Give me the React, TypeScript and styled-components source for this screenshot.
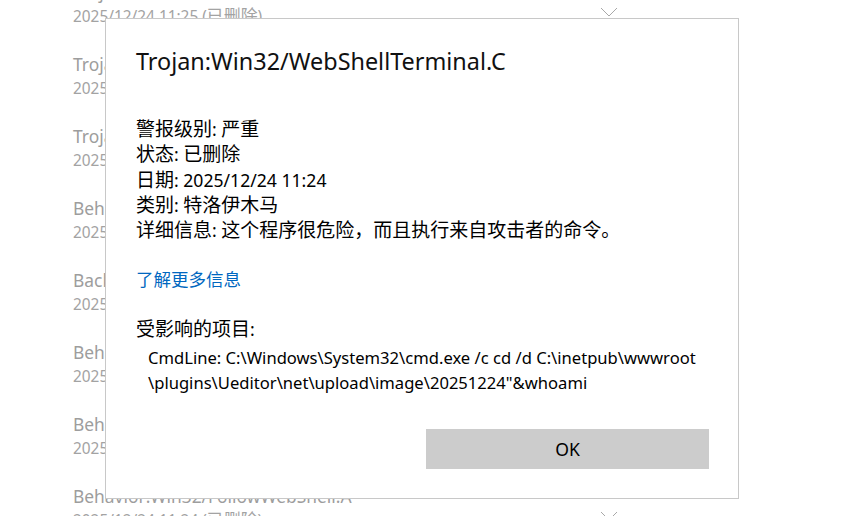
import React from 'react';
import styled, { createGlobalStyle } from 'styled-components';

const GlobalStyle = createGlobalStyle`
  html, body {
    margin: 0;
    padding: 0;
    background: #fff;
    overflow: hidden;
  }
  body {
    font-family: "Segoe UI", "Noto Sans", "Noto Sans CJK SC", sans-serif;
  }
`;

const Page = styled.div`
  position: relative;
  width: 857px;
  height: 516px;
  overflow: hidden;
  background: #fff;
`;

const HistoryList = styled.div`
  display: flex;
  flex-direction: column;
  margin-top: -20px;
  padding-left: 73px;
  width: 545px;
`;

const HistoryRow = styled.div`
  display: flex;
  align-items: center;
  height: 60px;
  margin-bottom: 12px;
`;

const RowText = styled.div`
  flex: 1;
  display: flex;
  flex-direction: column;
  align-self: flex-start;
`;

const RowTitle = styled.div`
  height: 24px;
  font-size: 17.4px;
  line-height: 24px;
  color: #9d9d9d;
  white-space: nowrap;
`;

const RowDate = styled.div`
  height: 22px;
  font-size: 15.4px;
  line-height: 22px;
  color: #a3a3a3;
  white-space: nowrap;
`;

const Chevron = styled.svg`
  width: 18px;
  height: 10px;
  margin-top: 4px;
  flex: none;
`;

const Han = styled.span<{ $scale: number }>`
  font-family: "Noto Sans CJK SC", sans-serif;
  font-size: ${p => p.$scale}em;
`;

const Dialog = styled.div`
  position: absolute;
  left: 105px;
  top: 18px;
  width: 632px;
  height: 479px;
  box-sizing: content-box;
  border: 1px solid #c8c8c8;
  background: #fff;
  display: flex;
  flex-direction: column;
`;

const DialogBody = styled.div`
  display: flex;
  flex-direction: column;
  padding: 26px 29px 29px 30px;
  flex: 1;
`;

const Title = styled.h1`
  margin: 0;
  font-size: 23.4px;
  line-height: 32px;
  font-weight: 400;
  color: #111;
`;

const InfoBlock = styled.div`
  margin-top: 38px;
  font-size: 17.6px;
  line-height: 25.25px;
  color: #000;
`;

const InfoLine = styled.div`
  height: 25.25px;
  white-space: nowrap;
`;

const MoreLink = styled.a`
  display: block;
  height: 25px;
  margin-top: 25px;
  font-size: 17.5px;
  line-height: 25px;
  color: #0067c0;
  text-decoration: none;
  align-self: flex-start;
  cursor: pointer;
`;

const SectionLabel = styled.div`
  height: 25px;
  margin-top: 24px;
  font-size: 17.6px;
  line-height: 25px;
  color: #000;
`;

const CmdBlock = styled.div`
  margin-top: 5px;
  padding-left: 12px;
  font-size: 16.6px;
  line-height: 25px;
  color: #000;
`;

const CmdLine = styled.div`
  height: 25px;
  white-space: nowrap;
`;

const OkButton = styled.button`
  margin-top: auto;
  align-self: flex-end;
  width: 283px;
  height: 40px;
  border: none;
  background: #cccccc;
  font-family: inherit;
  font-size: 17.6px;
  color: #000;
  cursor: pointer;
`;

const rows = [
  { title: 'Trojan:Win32/WebShellTerminal.C', date: '2025/12/24 11:25 (已删除)' },
  { title: 'Trojan:Win32/WebShellTerminal.C', date: '2025/12/24 11:25 (已删除)' },
  { title: 'Trojan:Win32/WebShellTerminal.C', date: '2025/12/24 11:25 (已删除)' },
  { title: 'Behavior:Win32/WebShellTerminal.A', date: '2025/12/24 11:25 (已删除)' },
  { title: 'Backdoor:Win32/WebShellTerminal.A', date: '2025/12/24 11:24 (已删除)' },
  { title: 'Behavior:Win32/FollowWebShell.A', date: '2025/12/24 11:24 (已删除)' },
  { title: 'Behavior:Win32/FollowWebShell.A', date: '2025/12/24 11:24 (已删除)' },
  { title: 'Behavior:Win32/FollowWebShell.A', date: '2025/12/24 11:24 (已删除)' },
];

const Mixed: React.FC<{ text: string; scale?: number }> = ({ text, scale = 1.08 }) => {
  const parts = text.split(/([\u3000-\u9fff\uff00-\uffef]+)/);
  return (
    <>
      {parts.map((part, i) =>
        i % 2 === 1 ? <Han key={i} $scale={scale}>{part}</Han> : part
      )}
    </>
  );
};

const ChevronIcon = () => (
  <Chevron viewBox="0 0 18 10">
    <polyline points="1,1 9,9 17,1" fill="none" stroke="#a8a8a8" strokeWidth="1" />
  </Chevron>
);

const details = [
  '警报级别: 严重',
  '状态: 已删除',
  '日期: 2025/12/24 11:24',
  '类别: 特洛伊木马',
  '详细信息: 这个程序很危险，而且执行来自攻击者的命令。',
];

const App: React.FC = () => {
  return (
    <>
      <GlobalStyle />
      <Page>
        <HistoryList>
          {rows.map((row, i) => (
            <HistoryRow key={i}>
              <RowText>
                <RowTitle>{row.title}</RowTitle>
                <RowDate><Mixed text={row.date} scale={1.1} /></RowDate>
              </RowText>
              <ChevronIcon />
            </HistoryRow>
          ))}
        </HistoryList>

        <Dialog>
          <DialogBody>
            <Title>Trojan:Win32/WebShellTerminal.C</Title>
            <InfoBlock>
              {details.map(line => (
                <InfoLine key={line}><Mixed text={line} /></InfoLine>
              ))}
            </InfoBlock>
            <MoreLink><Mixed text="了解更多信息" scale={1} /></MoreLink>
            <SectionLabel><Mixed text="受影响的项目:" /></SectionLabel>
            <CmdBlock>
              <CmdLine>CmdLine: C:\Windows\System32\cmd.exe /c cd /d C:\inetpub\wwwroot</CmdLine>
              <CmdLine>\plugins\Ueditor\net\upload\image\20251224"&amp;whoami</CmdLine>
            </CmdBlock>
            <OkButton>OK</OkButton>
          </DialogBody>
        </Dialog>
      </Page>
    </>
  );
};

export default App;
